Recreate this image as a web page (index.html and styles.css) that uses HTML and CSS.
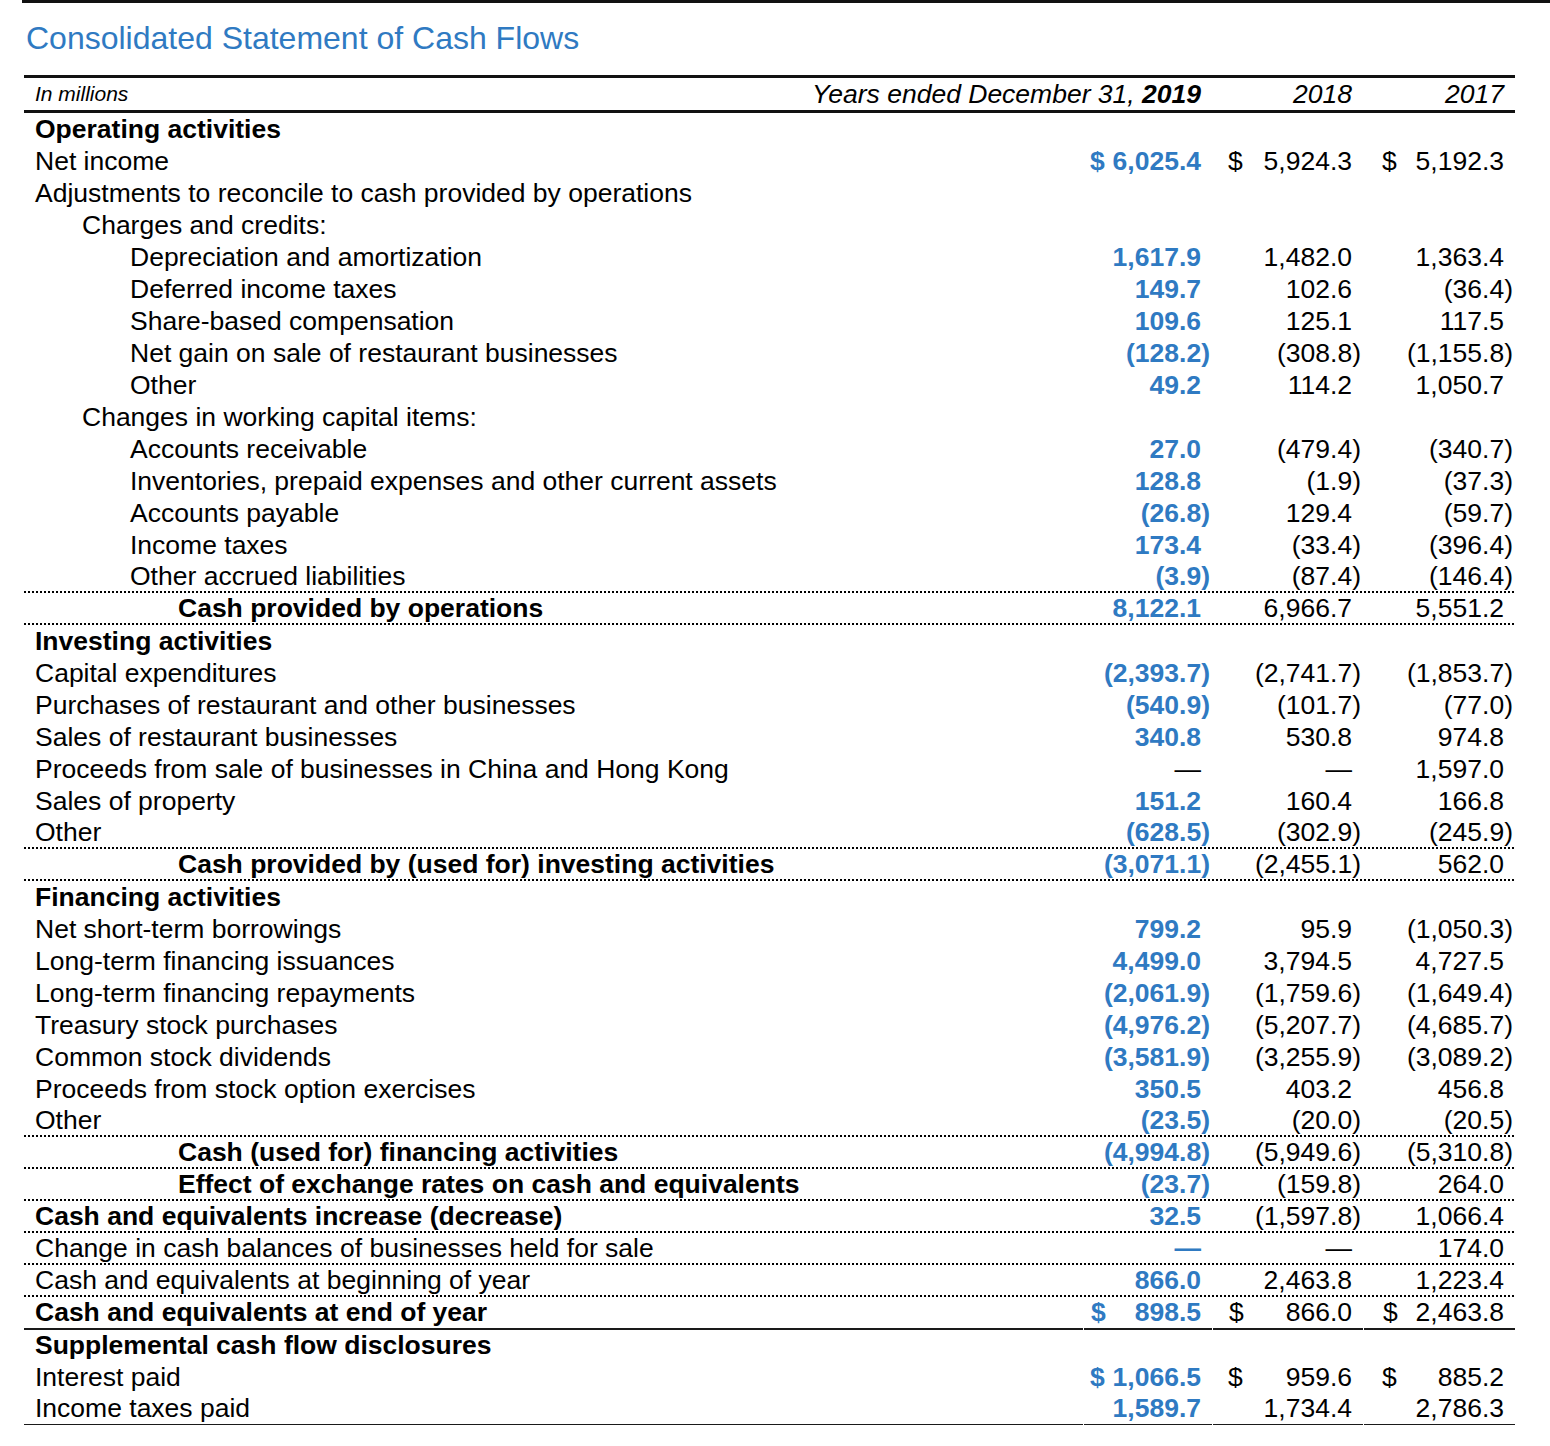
FILE: index.html
```html
<!DOCTYPE html>
<html lang="en">
<head>
<meta charset="utf-8">
<title>Consolidated Statement of Cash Flows</title>
<link rel="stylesheet" href="styles.css">
</head>
<body>
<div class="topline"></div>
<h1 class="title">Consolidated Statement of Cash Flows</h1>
<div class="table">
  <div class="row head">
    <div class="hcell"><span class="inm">In millions</span><span class="yrs">Years ended December 31, <b>2019</b></span></div>
    <div class="c c18 hy">2018</div>
    <div class="c c17 hy">2017</div>
  </div>

  <div class="row"><div class="lab b">Operating activities</div><div class="c c19"></div><div class="c c18"></div><div class="c c17"></div></div>
  <div class="row"><div class="lab">Net income</div><div class="c c19"><span class="cur">$</span>6,025.4</div><div class="c c18"><span class="cur">$</span>5,924.3</div><div class="c c17"><span class="cur">$</span>5,192.3</div></div>
  <div class="row"><div class="lab">Adjustments to reconcile to cash provided by operations</div><div class="c c19"></div><div class="c c18"></div><div class="c c17"></div></div>
  <div class="row"><div class="lab l1">Charges and credits:</div><div class="c c19"></div><div class="c c18"></div><div class="c c17"></div></div>
  <div class="row"><div class="lab l2">Depreciation and amortization</div><div class="c c19">1,617.9</div><div class="c c18">1,482.0</div><div class="c c17">1,363.4</div></div>
  <div class="row"><div class="lab l2">Deferred income taxes</div><div class="c c19">149.7</div><div class="c c18">102.6</div><div class="c c17">(36.4<span class="rp">)</span></div></div>
  <div class="row"><div class="lab l2">Share-based compensation</div><div class="c c19">109.6</div><div class="c c18">125.1</div><div class="c c17">117.5</div></div>
  <div class="row"><div class="lab l2">Net gain on sale of restaurant businesses</div><div class="c c19">(128.2<span class="rp">)</span></div><div class="c c18">(308.8<span class="rp">)</span></div><div class="c c17">(1,155.8<span class="rp">)</span></div></div>
  <div class="row"><div class="lab l2">Other</div><div class="c c19">49.2</div><div class="c c18">114.2</div><div class="c c17">1,050.7</div></div>
  <div class="row"><div class="lab l1">Changes in working capital items:</div><div class="c c19"></div><div class="c c18"></div><div class="c c17"></div></div>
  <div class="row"><div class="lab l2">Accounts receivable</div><div class="c c19">27.0</div><div class="c c18">(479.4<span class="rp">)</span></div><div class="c c17">(340.7<span class="rp">)</span></div></div>
  <div class="row"><div class="lab l2">Inventories, prepaid expenses and other current assets</div><div class="c c19">128.8</div><div class="c c18">(1.9<span class="rp">)</span></div><div class="c c17">(37.3<span class="rp">)</span></div></div>
  <div class="row"><div class="lab l2">Accounts payable</div><div class="c c19">(26.8<span class="rp">)</span></div><div class="c c18">129.4</div><div class="c c17">(59.7<span class="rp">)</span></div></div>
  <div class="row"><div class="lab l2">Income taxes</div><div class="c c19">173.4</div><div class="c c18">(33.4<span class="rp">)</span></div><div class="c c17">(396.4<span class="rp">)</span></div></div>
  <div class="row dot"><div class="lab l2">Other accrued liabilities</div><div class="c c19">(3.9<span class="rp">)</span></div><div class="c c18">(87.4<span class="rp">)</span></div><div class="c c17">(146.4<span class="rp">)</span></div></div>
  <div class="row dot"><div class="lab l3 b">Cash provided by operations</div><div class="c c19">8,122.1</div><div class="c c18">6,966.7</div><div class="c c17">5,551.2</div></div>

  <div class="row"><div class="lab b">Investing activities</div><div class="c c19"></div><div class="c c18"></div><div class="c c17"></div></div>
  <div class="row"><div class="lab">Capital expenditures</div><div class="c c19">(2,393.7<span class="rp">)</span></div><div class="c c18">(2,741.7<span class="rp">)</span></div><div class="c c17">(1,853.7<span class="rp">)</span></div></div>
  <div class="row"><div class="lab">Purchases of restaurant and other businesses</div><div class="c c19">(540.9<span class="rp">)</span></div><div class="c c18">(101.7<span class="rp">)</span></div><div class="c c17">(77.0<span class="rp">)</span></div></div>
  <div class="row"><div class="lab">Sales of restaurant businesses</div><div class="c c19">340.8</div><div class="c c18">530.8</div><div class="c c17">974.8</div></div>
  <div class="row"><div class="lab">Proceeds from sale of businesses in China and Hong Kong</div><div class="c c19 thin">—</div><div class="c c18">—</div><div class="c c17">1,597.0</div></div>
  <div class="row"><div class="lab">Sales of property</div><div class="c c19">151.2</div><div class="c c18">160.4</div><div class="c c17">166.8</div></div>
  <div class="row dot"><div class="lab">Other</div><div class="c c19">(628.5<span class="rp">)</span></div><div class="c c18">(302.9<span class="rp">)</span></div><div class="c c17">(245.9<span class="rp">)</span></div></div>
  <div class="row dot"><div class="lab l3 b">Cash provided by (used for) investing activities</div><div class="c c19">(3,071.1<span class="rp">)</span></div><div class="c c18">(2,455.1<span class="rp">)</span></div><div class="c c17">562.0</div></div>

  <div class="row"><div class="lab b">Financing activities</div><div class="c c19"></div><div class="c c18"></div><div class="c c17"></div></div>
  <div class="row"><div class="lab">Net short-term borrowings</div><div class="c c19">799.2</div><div class="c c18">95.9</div><div class="c c17">(1,050.3<span class="rp">)</span></div></div>
  <div class="row"><div class="lab">Long-term financing issuances</div><div class="c c19">4,499.0</div><div class="c c18">3,794.5</div><div class="c c17">4,727.5</div></div>
  <div class="row"><div class="lab">Long-term financing repayments</div><div class="c c19">(2,061.9<span class="rp">)</span></div><div class="c c18">(1,759.6<span class="rp">)</span></div><div class="c c17">(1,649.4<span class="rp">)</span></div></div>
  <div class="row"><div class="lab">Treasury stock purchases</div><div class="c c19">(4,976.2<span class="rp">)</span></div><div class="c c18">(5,207.7<span class="rp">)</span></div><div class="c c17">(4,685.7<span class="rp">)</span></div></div>
  <div class="row"><div class="lab">Common stock dividends</div><div class="c c19">(3,581.9<span class="rp">)</span></div><div class="c c18">(3,255.9<span class="rp">)</span></div><div class="c c17">(3,089.2<span class="rp">)</span></div></div>
  <div class="row"><div class="lab">Proceeds from stock option exercises</div><div class="c c19">350.5</div><div class="c c18">403.2</div><div class="c c17">456.8</div></div>
  <div class="row dot"><div class="lab">Other</div><div class="c c19">(23.5<span class="rp">)</span></div><div class="c c18">(20.0<span class="rp">)</span></div><div class="c c17">(20.5<span class="rp">)</span></div></div>
  <div class="row dot"><div class="lab l3 b">Cash (used for) financing activities</div><div class="c c19">(4,994.8<span class="rp">)</span></div><div class="c c18">(5,949.6<span class="rp">)</span></div><div class="c c17">(5,310.8<span class="rp">)</span></div></div>
  <div class="row dot"><div class="lab l3 b">Effect of exchange rates on cash and equivalents</div><div class="c c19">(23.7<span class="rp">)</span></div><div class="c c18">(159.8<span class="rp">)</span></div><div class="c c17">264.0</div></div>
  <div class="row dot"><div class="lab b">Cash and equivalents increase (decrease)</div><div class="c c19">32.5</div><div class="c c18">(1,597.8<span class="rp">)</span></div><div class="c c17">1,066.4</div></div>
  <div class="row dot"><div class="lab">Change in cash balances of businesses held for sale</div><div class="c c19">—</div><div class="c c18">—</div><div class="c c17">174.0</div></div>
  <div class="row dot"><div class="lab">Cash and equivalents at beginning of year</div><div class="c c19">866.0</div><div class="c c18">2,463.8</div><div class="c c17">1,223.4</div></div>
  <div class="row solid"><div class="lab b">Cash and equivalents at end of year</div><div class="c c19"><span class="cur">$</span>898.5</div><div class="c c18"><span class="cur">$</span>866.0</div><div class="c c17"><span class="cur">$</span>2,463.8</div></div>

  <div class="row"><div class="lab b">Supplemental cash flow disclosures</div><div class="c c19"></div><div class="c c18"></div><div class="c c17"></div></div>
  <div class="row"><div class="lab">Interest paid</div><div class="c c19"><span class="cur">$</span>1,066.5</div><div class="c c18"><span class="cur">$</span>959.6</div><div class="c c17"><span class="cur">$</span>885.2</div></div>
  <div class="row solid"><div class="lab">Income taxes paid</div><div class="c c19">1,589.7</div><div class="c c18">1,734.4</div><div class="c c17">2,786.3</div></div>
</div>
</body>
</html>
```
FILE: styles.css
```css
html, body {
  margin: 0;
  padding: 0;
  background: #fff;
}
body {
  font-family: "Liberation Sans", Arial, sans-serif;
  color: #000;
  width: 1550px;
}
.topline {
  margin-left: 22px;
  border-top: 3px solid #111;
  height: 0;
}
.title {
  margin: 17px 0 0 0;
  padding-left: 26px;
  font-size: 32px;
  line-height: 36px;
  font-weight: normal;
  color: #2f7ac2;
}
.table {
  margin: 19px 0 0 24px;
  width: 1491px;
  font-size: 26.5px;
}
.row {
  display: grid;
  grid-template-columns: 1059px 129px 151px 152px;
  height: 32px;
  box-sizing: border-box;
  align-items: stretch;
}
.row > div {
  display: flex;
  align-items: center;
  white-space: nowrap;
  box-sizing: border-box;
}
.row.dot {
  padding-bottom: 2px;
  background-image: linear-gradient(to right, #000 2px, transparent 2px);
  background-size: 4px 2px;
  background-repeat: repeat-x;
  background-position: left bottom;
}
.row.solid > div {
  border-bottom: 2px solid #1a1a1a;
}
.row.solid > .c {
  margin-left: 1px;
}
.row.head {
  height: 38px;
  border-top: 3px solid #111;
  border-bottom: 3px solid #111;
  font-style: italic;
}
.hcell {
  grid-column: 1 / span 2;
  justify-content: space-between;
  padding: 0 11px 0 11px;
}
.inm {
  font-size: 21px;
}
.yrs {
  font-size: 26.5px;
}
.lab {
  padding-left: 11px;
}
.lab.l1 { padding-left: 58px; }
.lab.l2 { padding-left: 106px; }
.lab.l3 { padding-left: 154px; }
.b { font-weight: bold; }
.c {
  justify-content: flex-end;
  padding-right: 11px;
}
.c19 {
  color: #2f7ac2;
  font-weight: bold;
  padding-left: 7px;
}
.c18 { padding-left: 16px; }
.c17 { padding-left: 19px; }
.c19.thin {
  color: #000;
  font-weight: normal;
}
.cur {
  margin-right: auto;
}
.rp {
  margin-right: -9px;
}
```
